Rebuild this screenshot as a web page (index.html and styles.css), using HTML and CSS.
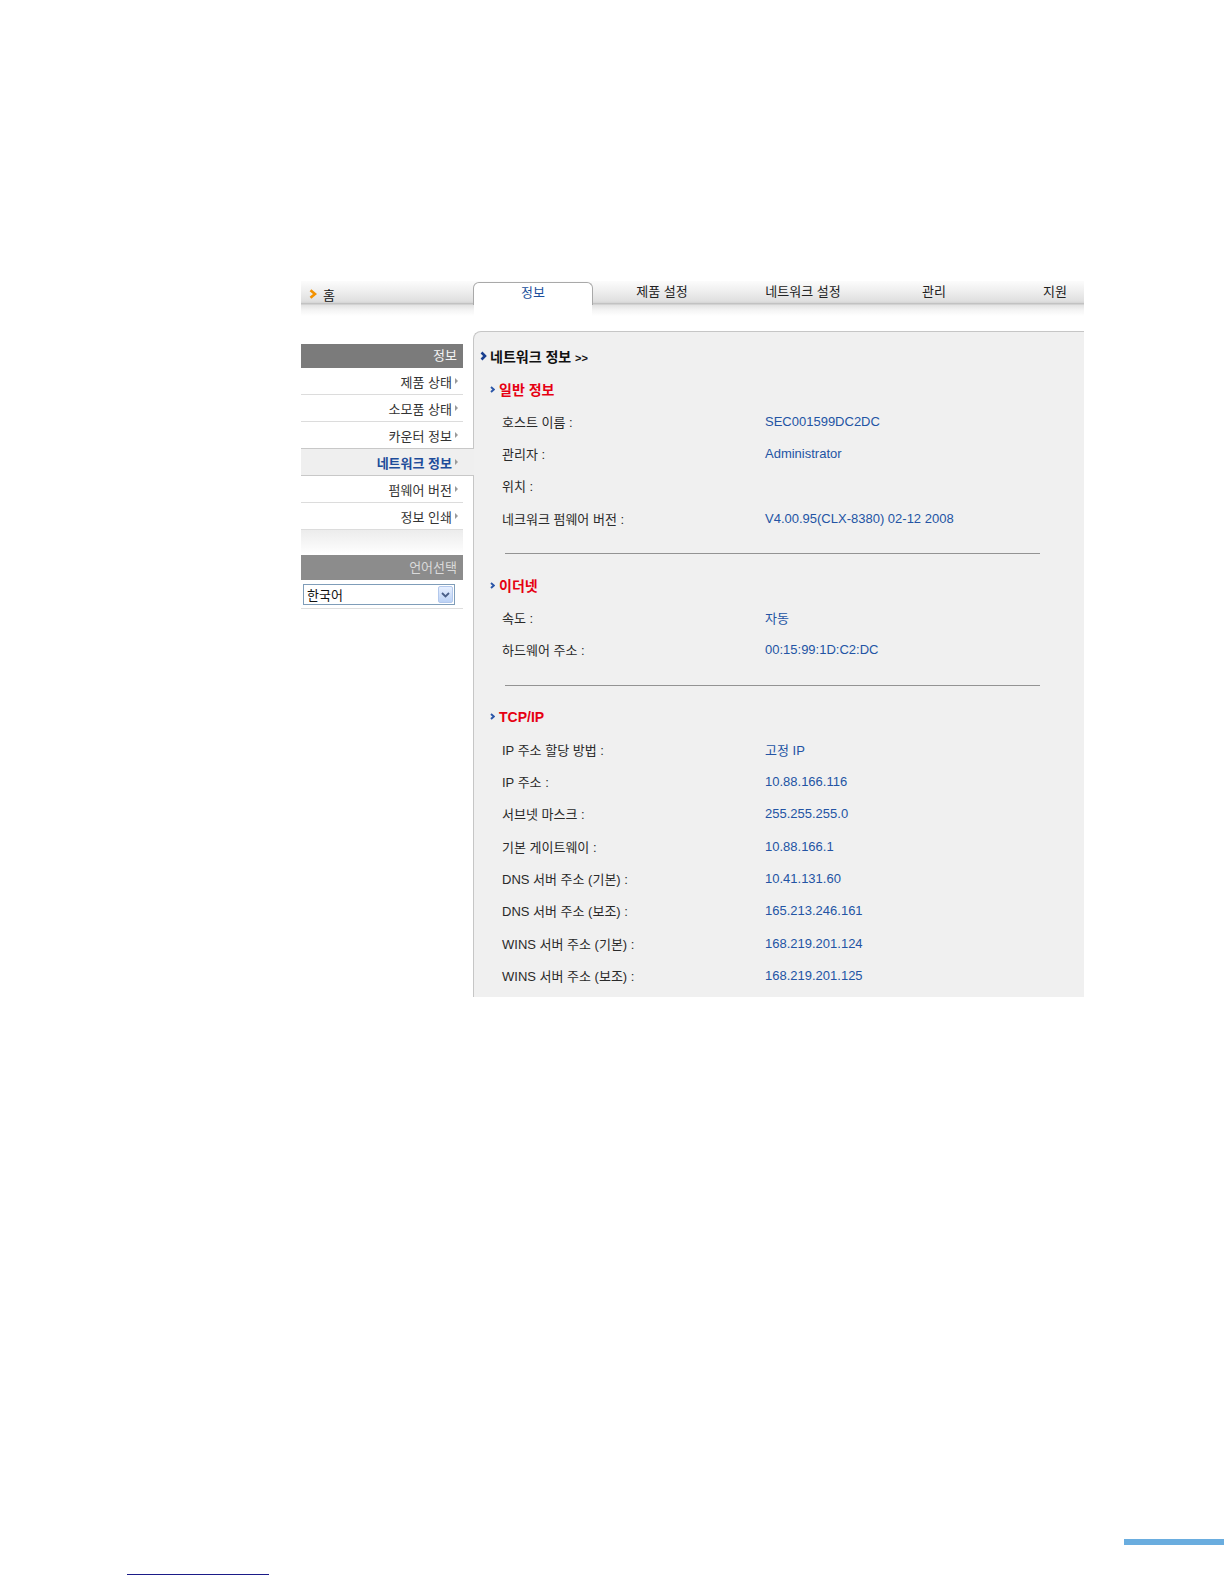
FILE: index.html
```html
<!DOCTYPE html>
<html lang="ko">
<head>
  <meta charset="UTF-8">
  <title>네트워크 정보</title>
  <meta name="viewport" content="width=device-width, initial-scale=1.0">
  <link rel="stylesheet" href="styles.css">
</head>
<body>
<div class="page">
  <div class="frame">

    <!-- top tabs -->
    <div class="topnav">
      <div class="home">
        <svg class="home-arrow" width="8" height="10" viewBox="0 0 8 10"><polyline points="1.5,1.2 6,5 1.5,8.8" fill="none" stroke="#f39200" stroke-width="2.6"/></svg>
        <span>홈</span>
      </div>
      <div class="tab tab-info active">정보</div>
      <div class="tab tab-setup">제품 설정</div>
      <div class="tab tab-net">네트워크 설정</div>
      <div class="tab tab-admin">관리</div>
      <div class="tab tab-support">지원</div>
    </div>

    <div class="body">
      <!-- left menu -->
      <div class="sidebar">
        <div class="side-head">정보</div>
        <ul class="side-menu">
          <li>제품 상태<span class="arr"></span></li>
          <li>소모품 상태<span class="arr"></span></li>
          <li>카운터 정보<span class="arr"></span></li>
          <li class="current">네트워크 정보<span class="arr"></span></li>
          <li>펌웨어 버전<span class="arr"></span></li>
          <li>정보 인쇄<span class="arr"></span></li>
        </ul>
        <div class="side-fade"></div>
        <div class="side-head lang-head">언어선택</div>
        <div class="lang-wrap">
          <div class="lang-select">
            <span>한국어</span>
            <span class="lang-btn">
              <svg width="9" height="6" viewBox="0 0 9 6"><polyline points="1,1 4.5,4.5 8,1" fill="none" stroke="#4a5f88" stroke-width="1.8"/></svg>
            </span>
          </div>
        </div>
      </div>

      <!-- content -->
      <div class="panel">
        <div class="panel-title">
          <svg width="7" height="10" viewBox="0 0 7 10"><polyline points="1.5,1.5 5,5 1.5,8.5" fill="none" stroke="#1a3f8f" stroke-width="2.6"/></svg>
          <span>네트워크 정보 <small>&gt;&gt;</small></span>
        </div>

        <div class="sec-title first">
          <svg width="5" height="7" viewBox="0 0 5 7"><polyline points="1,1 3.8,3.5 1,6" fill="none" stroke="#2b56a8" stroke-width="1.9"/></svg>
          <span>일반 정보</span>
        </div>
        <div class="row"><span class="label">호스트 이름 :</span><span class="value">SEC001599DC2DC</span></div>
        <div class="row"><span class="label">관리자 :</span><span class="value">Administrator</span></div>
        <div class="row"><span class="label">위치 :</span><span class="value"></span></div>
        <div class="row"><span class="label">네크워크 펌웨어 버전 :</span><span class="value">V4.00.95(CLX-8380) 02-12 2008</span></div>

        <div class="divider"></div>

        <div class="sec-title">
          <svg width="5" height="7" viewBox="0 0 5 7"><polyline points="1,1 3.8,3.5 1,6" fill="none" stroke="#2b56a8" stroke-width="1.9"/></svg>
          <span>이더넷</span>
        </div>
        <div class="row"><span class="label">속도 :</span><span class="value">자동</span></div>
        <div class="row"><span class="label">하드웨어 주소 :</span><span class="value">00:15:99:1D:C2:DC</span></div>

        <div class="divider"></div>

        <div class="sec-title">
          <svg width="5" height="7" viewBox="0 0 5 7"><polyline points="1,1 3.8,3.5 1,6" fill="none" stroke="#2b56a8" stroke-width="1.9"/></svg>
          <span>TCP/IP</span>
        </div>
        <div class="row"><span class="label">IP 주소 할당 방법 :</span><span class="value">고정 IP</span></div>
        <div class="row"><span class="label">IP 주소 :</span><span class="value">10.88.166.116</span></div>
        <div class="row"><span class="label">서브넷 마스크 :</span><span class="value">255.255.255.0</span></div>
        <div class="row"><span class="label">기본 게이트웨이 :</span><span class="value">10.88.166.1</span></div>
        <div class="row"><span class="label">DNS 서버 주소 (기본) :</span><span class="value">10.41.131.60</span></div>
        <div class="row"><span class="label">DNS 서버 주소 (보조) :</span><span class="value">165.213.246.161</span></div>
        <div class="row"><span class="label">WINS 서버 주소 (기본) :</span><span class="value">168.219.201.124</span></div>
        <div class="row"><span class="label">WINS 서버 주소 (보조) :</span><span class="value">168.219.201.125</span></div>
      </div>
    </div>
  </div>

  <div class="foot">
    <div class="foot-bar"></div>
    <div class="foot-line"></div>
  </div>
</div>
</body>
</html>
```

FILE: styles.css
```css
body {
  margin: 0;
  background: #fff;
  font-family: "Liberation Sans", "Noto Sans CJK KR", sans-serif;
  font-size: 13px;
  color: #2a2a2a;
}
.page { width: 1224px; }
.frame {
  margin-left: 301px;
  padding-top: 281px;
  width: 783px;
}

/* top tabs */
.topnav {
  display: flex;
  height: 50px;
  overflow: hidden;
  background: linear-gradient(to bottom,
    #fcfcfc 0px, #f0f0f0 9px, #e0e0e0 20px, #d4d4d4 22px,
    #c2c2c2 22px, #c2c2c2 23px, #e2e2e2 24px, #f4f4f4 29px, #fff 35px);
}
.home {
  width: 172px;
  flex-shrink: 0;
  height: 26px;
  display: flex;
  align-items: center;
  padding-left: 8px;
  box-sizing: border-box;
  color: #111;
}
.home-arrow { margin-right: 6px; }
.tab {
  flex-shrink: 0;
  height: 22px;
  line-height: 22px;
  text-align: center;
  color: #222;
}
.tab.active {
  position: relative;
  margin-top: 1px;
  height: 23px;
  line-height: 20px;
  box-sizing: border-box;
  background: #fff;
  border: 1px solid #a9a9a9;
  border-bottom: none;
  border-radius: 6px 6px 0 0;
  color: #1b4f9c;
}
.tab.active::after {
  content: "";
  position: absolute;
  left: 0;
  right: 0;
  top: 22px;
  height: 12px;
  background: #fff;
}
.tab-info { width: 120px; }
.tab-setup { width: 138px; }
.tab-net { width: 144px; }
.tab-admin { width: 118px; }
.tab-support { width: 124px; }

.body {
  display: flex;
  align-items: flex-start;
}

/* left menu */
.sidebar {
  width: 172px;
  flex-shrink: 0;
  padding-top: 13px;
}
.side-head {
  width: 162px;
  height: 24px;
  line-height: 24px;
  padding-right: 6px;
  box-sizing: border-box;
  text-align: right;
  background: #7b7b7b;
  color: #f4f4f4;
}
.side-menu {
  list-style: none;
  margin: 0;
  padding: 0;
}
.side-menu li {
  width: 162px;
  height: 27px;
  box-sizing: border-box;
  border-bottom: 1px solid #dcdcdc;
  display: flex;
  align-items: center;
  justify-content: flex-end;
  padding-right: 5px;
  color: #333;
}
.side-menu li.current {
  position: relative;
  z-index: 1;
  width: 173px;
  margin-top: -1px;
  height: 28px;
  padding-right: 16px;
  background: #efefef;
  border-top: 1px solid #c8c8c8;
  border-bottom: 1px solid #c8c8c8;
  color: #1d4c9a;
  font-weight: bold;
}
.arr {
  width: 0;
  height: 0;
  margin-left: 3px;
  border-left: 3px solid #9a9a9a;
  border-top: 3px solid transparent;
  border-bottom: 3px solid transparent;
}
.side-fade {
  width: 162px;
  height: 25px;
  background: linear-gradient(to bottom, #ececec, #fff);
}
.lang-head {
  height: 25px;
  line-height: 25px;
  background: #8c8c8c;
  color: #dadada;
}
.lang-wrap {
  width: 162px;
  padding: 4px 0 3px 2px;
  box-sizing: border-box;
  border-bottom: 1px solid #dedede;
}
.lang-select {
  width: 152px;
  height: 21px;
  box-sizing: border-box;
  border: 1px solid #7f9db9;
  background: #fff;
  display: flex;
  align-items: center;
  justify-content: space-between;
  padding: 0 1px 0 3px;
  color: #111;
}
.lang-btn {
  width: 15px;
  height: 17px;
  box-sizing: border-box;
  border: 1px solid #b3c8ec;
  border-radius: 2px;
  background: linear-gradient(to bottom, #e6efff, #bcd2f5);
  display: flex;
  align-items: center;
  justify-content: center;
}

/* content */
.panel {
  width: 611px;
  height: 666px;
  flex-shrink: 0;
  box-sizing: border-box;
  overflow: hidden;
  padding-top: 12px;
  background: #f0f0f0;
  border-top: 1px solid #c6c6c6;
  border-left: 1px solid #c6c6c6;
  border-top-left-radius: 8px;
}
.panel-title {
  height: 24px;
  display: flex;
  align-items: center;
  padding-left: 6px;
  font-size: 14px;
  font-weight: bold;
  color: #111;
}
.panel-title svg { margin-right: 3px; }
.panel-title small { font-size: 11px; }
.sec-title {
  height: 32px;
  display: flex;
  align-items: center;
  padding-left: 16px;
  font-size: 14px;
  font-weight: bold;
  color: #e60012;
}
.sec-title.first { margin-top: 5px; }
.sec-title svg { margin-right: 4px; }
.row {
  height: 32.33px;
  display: flex;
  align-items: center;
  padding-left: 28px;
}
.label {
  width: 263px;
  flex-shrink: 0;
  color: #2a2a2a;
}
.value { color: #2354a4; }
.divider {
  width: 535px;
  height: 1px;
  margin: 19px 0 15px 31px;
  background: #939393;
}

/* page decoration */
.foot { padding-top: 542px; }
.foot-bar {
  margin-left: 1124px;
  width: 100px;
  height: 6px;
  background: #6aaddf;
}
.foot-line {
  margin: 29px 0 0 127px;
  width: 142px;
  height: 1px;
  background: #1b1b88;
}
```
